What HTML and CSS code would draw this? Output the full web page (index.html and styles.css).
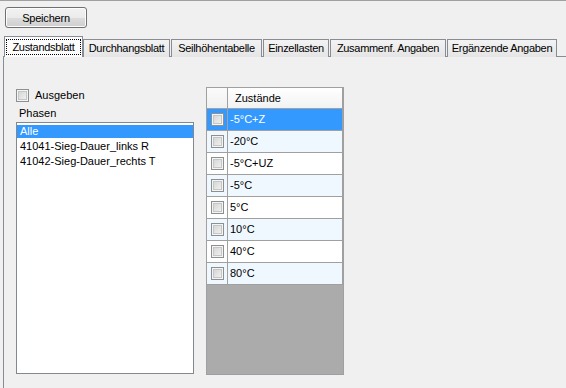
FILE: index.html
```html
<!DOCTYPE html>
<html>
<head>
<meta charset="utf-8">
<link rel="stylesheet" href="styles.css">
</head>
<body>
<div class="window">
  <div class="topline"></div>
  <div class="toolbar">
    <button class="btn">Speichern</button>
  </div>
  <div class="tabs">
    <div class="tab active t1"><span class="focus">Zustandsblatt</span></div>
    <div class="tab t2">Durchhangsblatt</div>
    <div class="tab t3">Seilhöhentabelle</div>
    <div class="tab t4">Einzellasten</div>
    <div class="tab t5">Zusammenf. Angaben</div>
    <div class="tab t6">Ergänzende Angaben</div>
  </div>
  <div class="panel">
    <div class="leftcol">
      <label class="chkrow"><span class="chk"></span><span>Ausgeben</span></label>
      <div class="lbl">Phasen</div>
      <div class="listbox">
        <div class="item sel">Alle</div>
        <div class="item">41041-Sieg-Dauer_links R</div>
        <div class="item">41042-Sieg-Dauer_rechts T</div>
      </div>
    </div>
    <div class="grid">
      <div class="row head">
        <div class="rh"></div>
        <div class="cell">Zustände</div>
      </div>
      <div class="row sel"><div class="rh"><span class="chk"></span></div><div class="cell">-5°C+Z</div></div>
      <div class="row alt"><div class="rh"><span class="chk"></span></div><div class="cell">-20°C</div></div>
      <div class="row"><div class="rh"><span class="chk"></span></div><div class="cell">-5°C+UZ</div></div>
      <div class="row alt"><div class="rh"><span class="chk"></span></div><div class="cell">-5°C</div></div>
      <div class="row"><div class="rh"><span class="chk"></span></div><div class="cell">5°C</div></div>
      <div class="row alt"><div class="rh"><span class="chk"></span></div><div class="cell">10°C</div></div>
      <div class="row"><div class="rh"><span class="chk"></span></div><div class="cell">40°C</div></div>
      <div class="row alt"><div class="rh"><span class="chk"></span></div><div class="cell">80°C</div></div>
    </div>
  </div>
</div>
</body>
</html>
```
FILE: styles.css
```css
* { box-sizing: border-box; }
html, body {
  margin: 0;
  padding: 0;
  background: #f0f0f0;
}
body {
  font-family: "Liberation Sans", Arial, sans-serif;
  font-size: 11px;
  color: #000;
}
.window {
  width: 566px;
  height: 388px;
  overflow: hidden;
  background: #f0f0f0;
}
.topline {
  height: 2px;
  border-bottom: 1px solid #a0a0a0;
  margin-top: -1px;
}
.toolbar {
  padding: 6px 0 0 5px;
  height: 35px;
}
.btn {
  width: 82px;
  height: 21px;
  padding: 0;
  font: inherit;
  letter-spacing: -0.2px;
  color: #000;
  border: 1px solid #707070;
  border-radius: 3px;
  background: linear-gradient(#f2f2f2 0%, #ebebeb 50%, #dddddd 51%, #cfcfcf 100%);
  box-shadow: inset 0 0 0 1px #fcfcfc;
}
.tabs {
  display: flex;
  align-items: flex-end;
  height: 21px;
  padding-left: 4px;
  position: relative;
  z-index: 1;
}
.tab {
  height: 18px;
  line-height: 16px;
  padding: 0;
  text-align: center;
  letter-spacing: -0.3px;
  border: 1px solid #898c95;
  border-bottom: none;
  background: linear-gradient(#f3f3f3, #e5e5e5);
  margin-right: 1px;
  white-space: nowrap;
  flex: none;
}
.t1 { width: 79px; }
.t2 { width: 87px; }
.t3 { width: 91px; }
.t4 { width: 66px; }
.t5 { width: 116px; }
.t6 { width: 110px; }
.tab.active {
  height: 21px;
  padding: 2px 1px 0;
  background: #fcfcfc;
  margin-right: 0;
}
.focus {
  display: block;
  border: 1px dotted #000;
  line-height: 14px;
  padding: 0 1px;
}
.panel {
  margin-left: 3px;
  margin-top: -1px;
  border-top: 1px solid #898c95;
  border-left: 1px solid #898c95;
  height: 340px;
  padding: 30px 0 0 12px;
  display: flex;
  gap: 12px;
  align-items: flex-start;
  background: #f0f0f0;
}
.leftcol {
  width: 178px;
  padding-top: 2px;
  display: flex;
  flex-direction: column;
}
.chkrow {
  display: flex;
  align-items: center;
  gap: 6px;
  height: 13px;
  line-height: 13px;
}
.chk {
  display: inline-block;
  width: 13px;
  height: 13px;
  flex: none;
  border: 1px solid #8e8f8f;
  background: linear-gradient(135deg, #cfd0d1, #f6f6f6);
  box-shadow: inset 0 0 0 1px #f4f4f4, inset 0 0 0 2px #c4c6c8;
}
.lbl {
  margin-top: 5px;
  height: 13px;
  line-height: 13px;
  padding-left: 3px;
}
.listbox {
  margin-top: 2px;
  height: 252px;
  background: #fff;
  border: 1px solid #828790;
  padding-top: 2px;
}
.item {
  height: 15px;
  line-height: 15px;
  padding-left: 3px;
  white-space: nowrap;
}
.item.sel {
  background: #3399ff;
  color: #fff;
  height: 13px;
  line-height: 13px;
  margin-bottom: 1px;
}
.grid {
  width: 138px;
  height: 288px;
  background: #ababab;
  border: 1px solid #a0a0a0;
  border-bottom-color: #9d9da6;
}
.row {
  display: flex;
  height: 22px;
  background: #fff;
  border-bottom: 1px solid #a0a0a0;
}
.row.alt { background: #f0f8ff; }
.row.head {
  height: 21px;
  background: linear-gradient(#ffffff, #f2f2f2);
}
.rh {
  width: 21px;
  flex: none;
  border-right: 1px solid #a0a0a0;
  display: flex;
  align-items: center;
  justify-content: center;
}
.row.head .rh { background: linear-gradient(#fbfbfb, #f0f0f0); }
.cell {
  flex: 1;
  border-right: 1px solid #a0a0a0;
  line-height: 21px;
  padding-left: 2px;
  white-space: nowrap;
}
.row.head .cell { padding-left: 7px; line-height: 20px; }
.row.sel { background: #3399ff; color: #fff; }
```
